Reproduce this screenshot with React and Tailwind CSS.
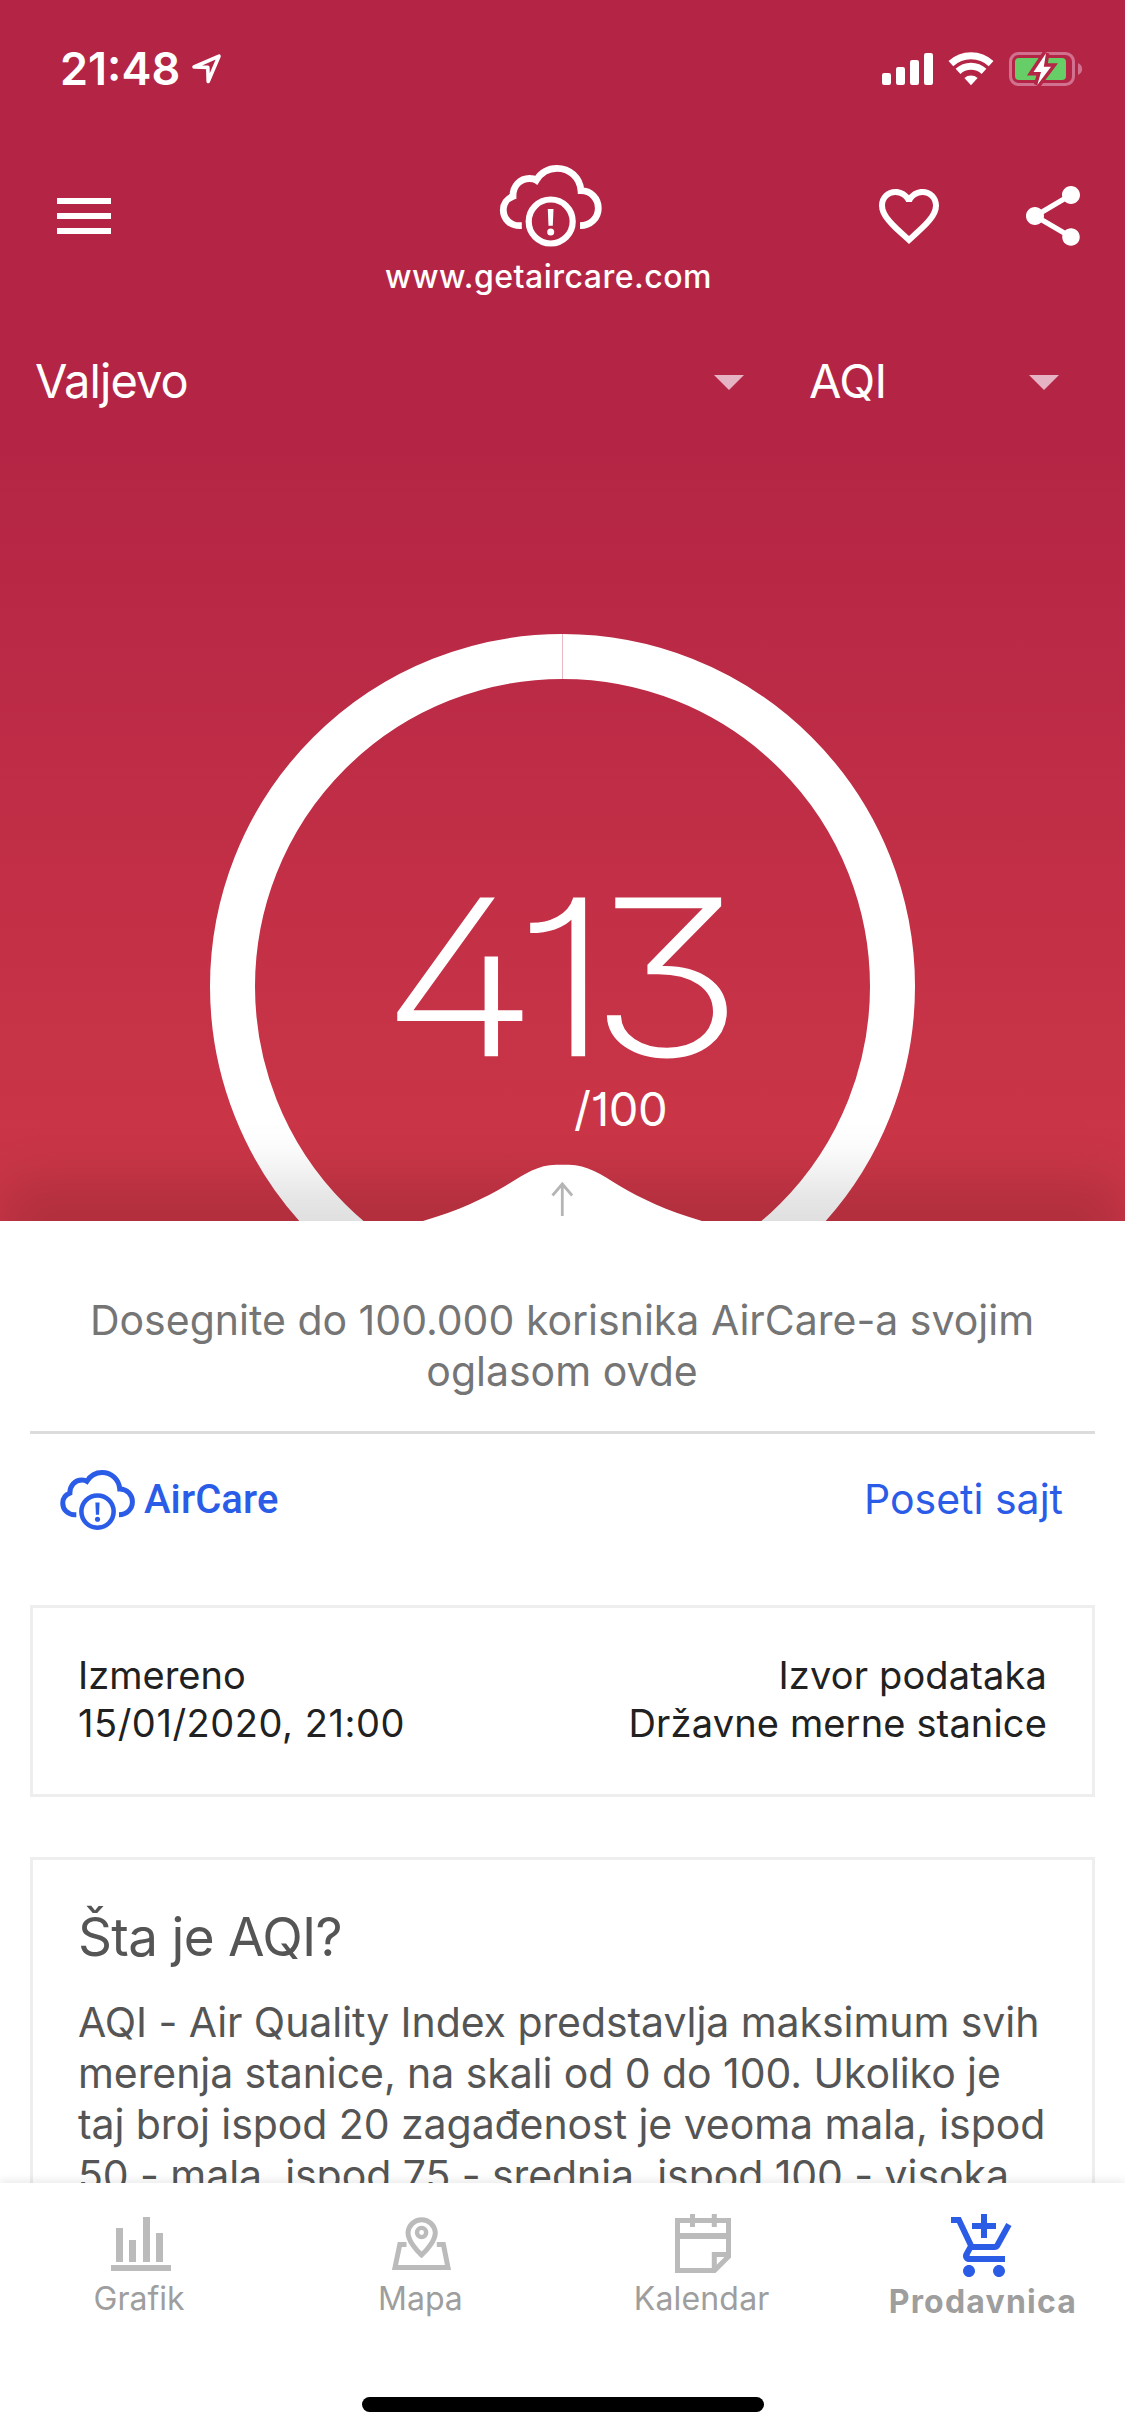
const PARAGRAPH = [
  "AQI - Air Quality Index predstavlja maksimum svih",
  "merenja stanice, na skali od 0 do 100. Ukoliko je",
  "taj broj ispod 20 zagađenost je veoma mala, ispod",
  "50 - mala, ispod 75 - srednja, ispod 100 - visoka,",
];

function CloudLogo({ className }) {
  return (
    <svg viewBox="0 0 120 110" className={className} fill="none" stroke="currentColor">
      <path
        strokeWidth="6.8"
        d="M31.8 75.7H29.5C20 75.7 13.3 68.5 13.3 60C13.3 54 17 48.5 23 46.3C22.8 36 30 28.5 39.5 28.5C42 28.5 44.5 29 46.3 30.2C51 22.5 58.5 18.3 67 18.3C79.5 18.3 90 27.5 91 40.7C101 40.7 108.3 48.5 108.3 58.2C108.3 68 100.5 75.7 90 75.7"
      />
      <circle cx="60.7" cy="71.5" r="22" strokeWidth="6.2" />
      <path fill="currentColor" stroke="none" d="M57.8 59H63.5L62.8 75.8H58.5Z" />
      <circle cx="60.7" cy="82" r="3.5" fill="currentColor" stroke="none" />
    </svg>
  );
}

function StatusBar() {
  return (
    <div className="h-[132px] shrink-0 flex items-start justify-between pt-[46px] pl-[60px] pr-[43px]">
      <div className="flex items-start">
        <span className="text-[45px] leading-[45px] font-semibold">21:48</span>
        <svg width="32" height="32" viewBox="0 0 32 32" className="ml-[11px] mt-[7px]" fill="none" stroke="white" strokeWidth="3.6" strokeLinejoin="round">
          <path d="M3 14L28 3.2L17.2 28.5L16.8 14.4Z" />
        </svg>
      </div>
      <div className="flex items-start pt-[6px]">
        <svg width="51" height="34" viewBox="0 0 51 34" fill="white">
          <rect x="0" y="21" width="9" height="12" rx="2.2" />
          <rect x="14" y="15" width="9" height="18" rx="2.2" />
          <rect x="28" y="8" width="9" height="25" rx="2.2" />
          <rect x="42" y="1" width="9" height="32" rx="2.2" />
        </svg>
        <svg width="46" height="34" viewBox="0 0 46 34" className="ml-[15px]" fill="none" stroke="white" strokeWidth="7">
          <path d="M2.9 11.6A29.5 29.5 0 0 1 43.1 11.6" />
          <path d="M10 19.4A19 19 0 0 1 36 19.4" />
          <path d="M23 33.3L16.4 26A10 10 0 0 1 29.6 26Z" fill="white" stroke="none" />
        </svg>
        <svg width="73" height="34" viewBox="0 0 73 34" className="ml-[15px]">
          <rect x="1.5" y="1.5" width="63" height="31" rx="8" fill="none" stroke="#d27090" strokeWidth="3" />
          <path d="M69 11C74.5 13.5 74.5 20.5 69 23Z" fill="#d27090" />
          <rect x="6" y="6" width="51" height="22" rx="4" fill="#67cd66" />
          <path d="M37 1.3L24.5 20H32L28.3 33L42 14.7H34.8Z" fill="none" stroke="#b52546" strokeWidth="7" />
          <path d="M37 1.3L24.5 20H32L28.3 33L42 14.7H34.8Z" fill="white" />
        </svg>
      </div>
    </div>
  );
}

function AppBar() {
  return (
    <div className="h-[225px] shrink-0 flex items-start">
      <svg width="72" height="72" viewBox="0 0 24 24" className="ml-12 mt-12" fill="white">
        <path d="M3 18h18v-2H3v2zm0-5h18v-2H3v2zm0-7v2h18V6H3z" />
      </svg>
      <div className="ml-[262px] w-[333px] flex flex-col items-center">
        <CloudLogo className="w-[120px] h-[110px] mt-[18px] ml-[2px]" />
        <span className="-mt-[3px] text-[32px] leading-[40px] font-medium tracking-[0.49px]">www.getaircare.com</span>
      </div>
      <svg width="72" height="72" viewBox="0 0 24 24" className="ml-[158px] mt-12" fill="white">
        <path d="M16.5 3c-1.74 0-3.41.81-4.5 2.09C10.91 3.81 9.24 3 7.5 3 4.42 3 2 5.42 2 8.5c0 3.78 3.4 6.86 8.55 11.54L12 21.35l1.45-1.32C18.6 15.36 22 12.28 22 8.5 22 5.42 19.58 3 16.5 3zm-4.4 15.55l-.1.1-.1-.1C7.14 14.24 4 11.39 4 8.5 4 6.5 5.5 5 7.5 5c1.54 0 3.04.99 3.57 2.36h1.87C13.46 5.99 14.96 5 16.5 5c2 0 3.5 1.5 3.5 3.5 0 2.89-3.14 5.74-7.9 10.05z" />
      </svg>
      <svg width="72" height="72" viewBox="0 0 24 24" className="ml-[72px] mt-12" fill="white">
        <path d="M18 16.08c-.76 0-1.44.3-1.96.77L8.91 12.7c.05-.23.09-.46.09-.7s-.04-.47-.09-.7l7.05-4.11c.54.5 1.25.81 2.04.81 1.66 0 3-1.34 3-3s-1.34-3-3-3-3 1.34-3 3c0 .24.04.47.09.7L8.04 9.81C7.5 9.31 6.79 9 6 9c-1.66 0-3 1.34-3 3s1.34 3 3 3c.79 0 1.5-.31 2.04-.81l7.12 4.16c-.05.21-.08.43-.08.65 0 1.61 1.31 2.92 2.92 2.92 1.61 0 2.92-1.31 2.92-2.92s-1.31-2.92-2.92-2.92z" />
      </svg>
    </div>
  );
}

function Select({ label, className }) {
  return (
    <div className={`flex items-center justify-between ${className}`}>
      <span>{label}</span>
      <svg width="30" height="15" viewBox="0 0 30 15" className="mt-[2px]">
        <path d="M0 0H30L15 15Z" fill="#e6b3c4" />
      </svg>
    </div>
  );
}

function Gauge() {
  return (
    <svg width="1125" height="587" viewBox="0 634 1125 587" className="mt-[229px] shrink-0">
      <circle cx="562.5" cy="986.5" r="330" fill="none" stroke="white" strokeWidth="45" />
      <path d="M562.5 634V679" stroke="#e9b9c3" strokeWidth="1" />
      <text
        x="317 428.5 491"
        y="1055.5"
        transform="scale(1.2 1)"
        fill="white"
        stroke="white"
        strokeWidth="1.6"
        className="text-[216px] font-extralight [font-feature-settings:'cv01','cv02','cv09']"
      >
        413
      </text>
      <text x="574" y="1126" fill="white" className="text-[47px] font-normal tracking-[-0.4px] [font-feature-settings:'cv01']">
        /100
      </text>
    </svg>
  );
}

function Sheet() {
  return (
    <section className="relative h-[1300px] shrink-0 bg-white px-[30px] pt-[74px] shadow-[0_-43px_54px_rgba(0,0,0,0.13)]">
      {/* handle that pokes out above the sheet */}
      <svg width="290" height="58" viewBox="418 0 290 58" className="absolute left-[418px] -top-[57px]">
        <path d="M418 58L423 57C458 47 485 34 506 21.5C524 10.5 538 0.8 556 0.8H569C587 0.8 601 10.5 619 21.5C640 34 667 47 702 57L707 58Z" fill="white" />
        <path d="M562.3 52V20M552.5 31.5L562.3 20L572.1 31.5" fill="none" stroke="#b5b5b5" strokeWidth="2.8" />
      </svg>

      <p className="-ml-[1px] text-center text-[41px] leading-[51px] text-[#757575]">
        Dosegnite do 100.000 korisnika AirCare-a svojim
        <br />
        oglasom ovde
      </p>
      <div className="mt-[34px] h-[3px] bg-[#dcdcdc]" />

      <div className="mt-[25px] flex items-start text-[#2a5ce8]">
        <CloudLogo className="w-[88px] h-[81px] ml-[23px]" />
        <span className="ml-[3px] mt-[17px] text-[40px] leading-[48px] font-medium font-[Roboto] tracking-[0.1px]">AirCare</span>
        <a className="ml-auto mr-[32px] mt-4 text-[41px] leading-[48px]">Poseti sajt</a>
      </div>

      <div className="mt-[65px] h-[192px] border-[3px] border-[#eeeeee] px-[45px] pt-[43px] flex justify-between text-[38px] leading-[48px] text-[#212121]">
        <div>
          <p>Izmereno</p>
          <p className="tracking-[0.54px]">15/01/2020, 21:00</p>
        </div>
        <div className="text-right tracking-[0.15px]">
          <p>Izvor podataka</p>
          <p>Državne merne stanice</p>
        </div>
      </div>

      <div className="mt-[60px] h-[500px] border-[3px] border-[#eeeeee] px-[45px] pt-[45px] text-[#555555]">
        <h2 className="text-[53px] leading-[64px] tracking-[-0.69px]">Šta je AQI?</h2>
        <div className="mt-[28px] text-[41px] leading-[51px] tracking-[-0.07px] whitespace-nowrap">
          {PARAGRAPH.map((line) => (
            <p key={line}>{line}</p>
          ))}
        </div>
      </div>
    </section>
  );
}

const TABS = [
  {
    label: "Grafik",
    text: "",
    icon: (
      <svg width="72" height="72" viewBox="0 0 72 72" fill="#bbbbbb">
        <rect x="6" y="57" width="60" height="6" />
        <rect x="11" y="20" width="7" height="34" />
        <rect x="24" y="32" width="7" height="22" />
        <rect x="38" y="9" width="7" height="45" />
        <rect x="51" y="25" width="7" height="29" />
      </svg>
    ),
  },
  {
    label: "Mapa",
    text: "",
    icon: (
      <svg width="72" height="72" viewBox="0 0 72 72" fill="none" stroke="#bbbbbb" strokeWidth="5">
        <path d="M35.6 47C31 43 22 33 22 24.4A13.7 13.9 0 0 1 49.3 24.4C49.3 33 40 43 35.6 47Z" />
        <circle cx="35.6" cy="24.5" r="4.6" strokeWidth="4.4" />
        <path d="M20.5 36.5H13.8L9 59.5H62L57.4 36.5H50.8" />
      </svg>
    ),
  },
  {
    label: "Kalendar",
    text: "tracking-[0.17px]",
    icon: (
      <svg width="72" height="72" viewBox="0 0 72 72" fill="none" stroke="#bbbbbb" strokeWidth="5">
        <path d="M10.5 12.5H61.5V48.5L47.5 62.5H10.5Z" />
        <path d="M10 28H62" strokeWidth="6" />
        <path d="M25.5 6V19M47.3 6V19M47.3 62V46.5H62" />
      </svg>
    ),
  },
  {
    label: "Prodavnica",
    text: "font-bold tracking-[1.2px]",
    icon: (
      <svg width="72" height="72" viewBox="0 0 24 24" className="mt-[3px]" fill="#2b5ce6">
        <path d="M11 9h2V6h3V4h-3V1h-2v3H8v2h3v3zm-4 9c-1.1 0-1.99.9-1.99 2S5.9 22 7 22s2-.9 2-2-.9-2-2-2zm10 0c-1.1 0-1.99.9-1.99 2s.89 2 1.99 2 2-.9 2-2-.9-2-2-2zm-9.83-3.25l.03-.12.9-1.63h7.45c.75 0 1.41-.41 1.75-1.03l3.86-7.01L19.42 4h-.01l-1.1 2-2.76 5H8.53l-.13-.27L6.16 6l-.95-2-.94-2H1v2h2l3.6 7.59-1.35 2.45c-.16.28-.25.61-.25.96 0 1.1.9 2 2 2h12v-2H7.42c-.13 0-.25-.11-.25-.25z" />
      </svg>
    ),
  },
];

function BottomNav() {
  return (
    <nav className="relative h-[253px] shrink-0 bg-white pt-[25px] flex flex-col items-center shadow-[0_-3px_8px_rgba(0,0,0,0.08)]">
      <div className="w-full grid grid-cols-4">
        {TABS.map((tab) => (
          <div key={tab.label} className="flex flex-col items-center">
            {tab.icon}
            <span className={`pr-[3px] mt-[1px] text-[32px] leading-[36px] text-[#9e9e9e] ${tab.text}`}>{tab.label}</span>
          </div>
        ))}
      </div>
      {/* home indicator */}
      <div className="mt-auto mb-[24px] w-[402px] h-[15px] rounded-full bg-black" />
    </nav>
  );
}

export default function App() {
  return (
    <div className="w-[1125px] h-[2436px] flex flex-col overflow-hidden bg-white font-['Inter','Liberation_Sans',sans-serif]">
      <main className="flex-1 min-h-0 overflow-hidden flex flex-col">
        <header className="h-[1221px] shrink-0 flex flex-col overflow-hidden text-white bg-[linear-gradient(to_bottom,#b42545_0px,#b42545_440px,#cb3647_1170px)]">
          <StatusBar />
          <AppBar />
          <div className="flex shrink-0 pl-[35px] text-[47px] leading-[48px]">
            <Select label="Valjevo" className="w-[709px] tracking-[-0.95px]" />
            <Select label="AQI" className="ml-[65px] w-[250px] tracking-[-0.63px]" />
          </div>
          <Gauge />
        </header>
        <Sheet />
      </main>
      <BottomNav />
    </div>
  );
}
